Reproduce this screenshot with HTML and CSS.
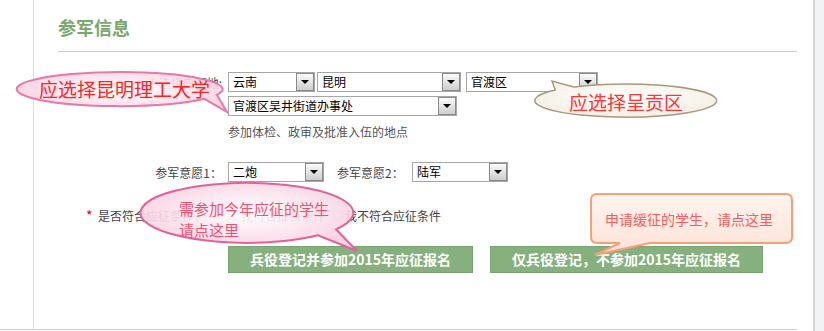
FILE: index.html
```html
<!doctype html>
<html>
	<head>
		<meta charset='utf-8'>
		<title>参军信息</title>
		<link rel="stylesheet" href="styles.css">
	</head>
	<body>
		<div class='frame'>
			<div class='panel'>
				<h2 class='title'>参军信息</h2>
				<form class='form'>
					<div class='row'>
						<label class='lbl'><span class='req'>*</span> 选择应征地:</label>
						<div class='sel w-prov'><span class='val'>云南</span><span class='drop'></span></div>
						<div class='sel w-city'><span class='val'>昆明</span><span class='drop'></span></div>
						<div class='sel w-dist'><span class='val'>官渡区</span><span class='drop'></span></div>
					</div>
					<div class='row row-sub'>
						<div class='sel w-street'><span class='val'>官渡区吴井街道办事处</span><span class='drop'></span></div>
					</div>
					<div class='hint'>参加体检、政审及批准入伍的地点</div>
					<div class='row row-wish'>
						<label class='lbl'>参军意愿1：</label>
						<div class='sel w-wish'><span class='val'>二炮</span><span class='drop'></span></div>
						<label class='lbl2'>参军意愿2：</label>
						<div class='sel w-wish'><span class='val'>陆军</span><span class='drop'></span></div>
					</div>
					<div class='check'>
						<span class='req'>*</span>
						<span class='check-lbl'>是否符合应征条件：</span>
						<span class='radio'></span><span class='opt'>我符合报名条件</span>
						<span class='radio'></span><span class='opt'>我不符合应征条件</span>
					</div>
					<div class='actions'>
						<button type='button' class='btn btn-join'>兵役登记并参加2015年应征报名</button>
						<button type='button' class='btn btn-only'>仅兵役登记，不参加2015年应征报名</button>
					</div>
				</form>
			</div>
		</div>
		<div class='gap'></div>
		<div class='edge'></div>

		<!-- callouts drawn over the form -->
		<div class='bubble b-school'>
			<svg width='220' height='48' viewBox='0 0 220 48'>
				<defs>
					<radialGradient id='g-pink' cx='50%' cy='45%' r='55%'>
						<stop offset='0' stop-color='#fff' stop-opacity='0.88'/>
						<stop offset='1' stop-color='#f8cfe0' stop-opacity='0.92'/>
					</radialGradient>
				</defs>
				<path d='M202.8 26.8 A103 17 0 1 0 190.4 30.8 L213 44 Z' fill='url(#g-pink)' stroke='#e57aa8' stroke-width='2'/>
			</svg>
			<span class='b-text'>应选择昆明理工大学</span>
		</div>
		<div class='bubble b-dist'>
			<svg width='194' height='44' viewBox='0 0 194 44'>
				<defs>
					<radialGradient id='g-cream' cx='50%' cy='45%' r='55%'>
						<stop offset='0' stop-color='#fff'/>
						<stop offset='1' stop-color='#f4f0e6'/>
					</radialGradient>
				</defs>
				<path d='M25.3 12.1 A91 16.5 0 1 0 43.8 9 L22 3 Z' fill='url(#g-cream)' stroke='#a8997a' stroke-width='1.5'/>
			</svg>
			<span class='b-text'>应选择呈贡区</span>
		</div>
		<div class='bubble b-join'>
			<svg width='226' height='76' viewBox='0 0 226 76'>
				<defs>
					<radialGradient id='g-pink2' cx='50%' cy='45%' r='55%'>
						<stop offset='0' stop-color='#fff' stop-opacity='0.88'/>
						<stop offset='1' stop-color='#f8cfe0' stop-opacity='0.92'/>
					</radialGradient>
				</defs>
				<path d='M200 49.3 A106.5 30 0 1 0 182 55.2 L221 71 Z' fill='url(#g-pink2)' stroke='#e0629a' stroke-width='2'/>
			</svg>
			<span class='b-text'>需参加今年应征的学生<br>请点这里</span>
		</div>
		<div class='bubble b-defer'>
			<svg width='208' height='68' viewBox='0 0 208 68'>
				<defs>
					<linearGradient id='g-peach' x1='0' y1='0' x2='0' y2='1'>
						<stop offset='0' stop-color='#fff4ef'/>
						<stop offset='1' stop-color='#fde2d6'/>
					</linearGradient>
				</defs>
				<path d='M9 3 H198 Q204 3 204 9 V46 Q204 52 198 52 H62 L7 64 L32 52 H9 Q3 52 3 46 V9 Q3 3 9 3 Z' fill='url(#g-peach)' stroke='#f7a078' stroke-width='2'/>
			</svg>
			<span class='b-text'>申请缓征的学生，请点这里</span>
		</div>
	</body>
</html>
```

FILE: styles.css
```css
* {
	box-sizing: border-box;
}

html, body {
	margin: 0;
}

body {
	position: relative;
	display: flex;
	width: 824px;
	height: 331px;
	overflow: hidden;
	background: #fff;
	font-family: "Noto Sans CJK SC", sans-serif;
	font-size: 12px;
	color: #444;
}

.frame {
	width: 797px;
	height: 330px;
	border-bottom: 1px solid #ccc;
}

.gap {
	width: 16px;
}

.edge {
	width: 11px;
	border-left: 2px solid #d4d4d4;
	background: #f1f3f4;
}

.panel {
	height: 100%;
	margin-left: 33px;
	padding: 15px 0 0 24px;
	border-left: 1px solid #ddd;
}

.title {
	margin: 0;
	padding-bottom: 12px;
	border-bottom: 1px solid #ccc;
	font-size: 18px;
	line-height: 24px;
	font-weight: bold;
	color: #79a86c;
}

/* form rows */

.form {
	margin-top: 20px;
}

.row {
	display: flex;
	align-items: center;
	height: 20px;
}

.row-sub {
	margin-top: 4px;
	padding-left: 170px;
}

.row-wish {
	margin-top: 21px;
}

.lbl {
	width: 164px;
	margin-right: 6px;
	text-align: right;
}

.lbl2 {
	width: 75px;
	margin-left: 13px;
}

.req {
	color: #e00;
}

.hint {
	margin: 7px 0 0 170px;
	line-height: 18px;
	color: #555;
}

/* fake selects */

.sel {
	display: flex;
	height: 20px;
	border: 1px solid #a6a6a6;
	background: #fff;
}

.sel .val {
	flex: 1;
	padding-left: 4px;
	line-height: 18px;
	color: #000;
	white-space: nowrap;
}

.sel .drop {
	display: flex;
	align-items: center;
	justify-content: center;
	width: 18px;
	border: 1px solid #8a8a8a;
	background: linear-gradient(#fbfbfb, #cdcdcd);
}

.sel .drop::after {
	content: '';
	border-left: 4px solid transparent;
	border-right: 4px solid transparent;
	border-top: 4px solid #000;
}

.w-prov { width: 87px; }
.w-city { width: 144px; margin-left: 2px; }
.w-dist { width: 132px; margin-left: 5px; }
.w-street { width: 229px; }
.w-wish { width: 96px; }

/* eligibility */

.check {
	display: flex;
	align-items: center;
	height: 20px;
	margin-top: 23px;
	padding-left: 28px;
}

.check .req {
	width: 12px;
	font-size: 14px;
}

.check-lbl {
	width: 130px;
}

.radio {
	width: 11px;
	height: 11px;
	margin-right: 2px;
	border: 1px solid #b5b5b5;
	border-radius: 50%;
	background: radial-gradient(#fff 30%, #e6e6e6 32%, #fff 70%);
}

.opt + .radio {
	margin-left: 7px;
}

/* buttons */

.actions {
	display: flex;
	gap: 17px;
	margin-top: 21px;
	padding-left: 170px;
}

.btn {
	height: 27px;
	padding: 0;
	border: 1px solid #77a36f;
	background: #86b17e;
	color: #fff;
	font-family: inherit;
	font-size: 14px;
	font-weight: bold;
	line-height: 25px;
}

.btn-join { width: 245px; }
.btn-only { width: 273px; }

/* callouts */

.bubble {
	position: absolute;
}

.bubble svg {
	display: block;
}

.b-text {
	position: absolute;
	line-height: 1;
	white-space: nowrap;
}

.b-school {
	left: 14px;
	top: 68px;
}

.b-school .b-text {
	left: 25px;
	top: 11px;
	font-size: 19px;
	color: #f22;
}

.b-dist {
	left: 530px;
	top: 78px;
}

.b-dist .b-text {
	left: 39px;
	top: 14px;
	font-size: 19px;
	color: #f33;
}

.b-join {
	left: 136px;
	top: 180px;
}

.b-join .b-text {
	left: 43px;
	top: 18px;
	font-size: 15px;
	line-height: 21px;
	color: #f4506e;
}

.b-defer {
	left: 588px;
	top: 191px;
}

.b-defer .b-text {
	left: 17px;
	top: 21px;
	font-size: 14px;
	color: #f25f5f;
}
```
